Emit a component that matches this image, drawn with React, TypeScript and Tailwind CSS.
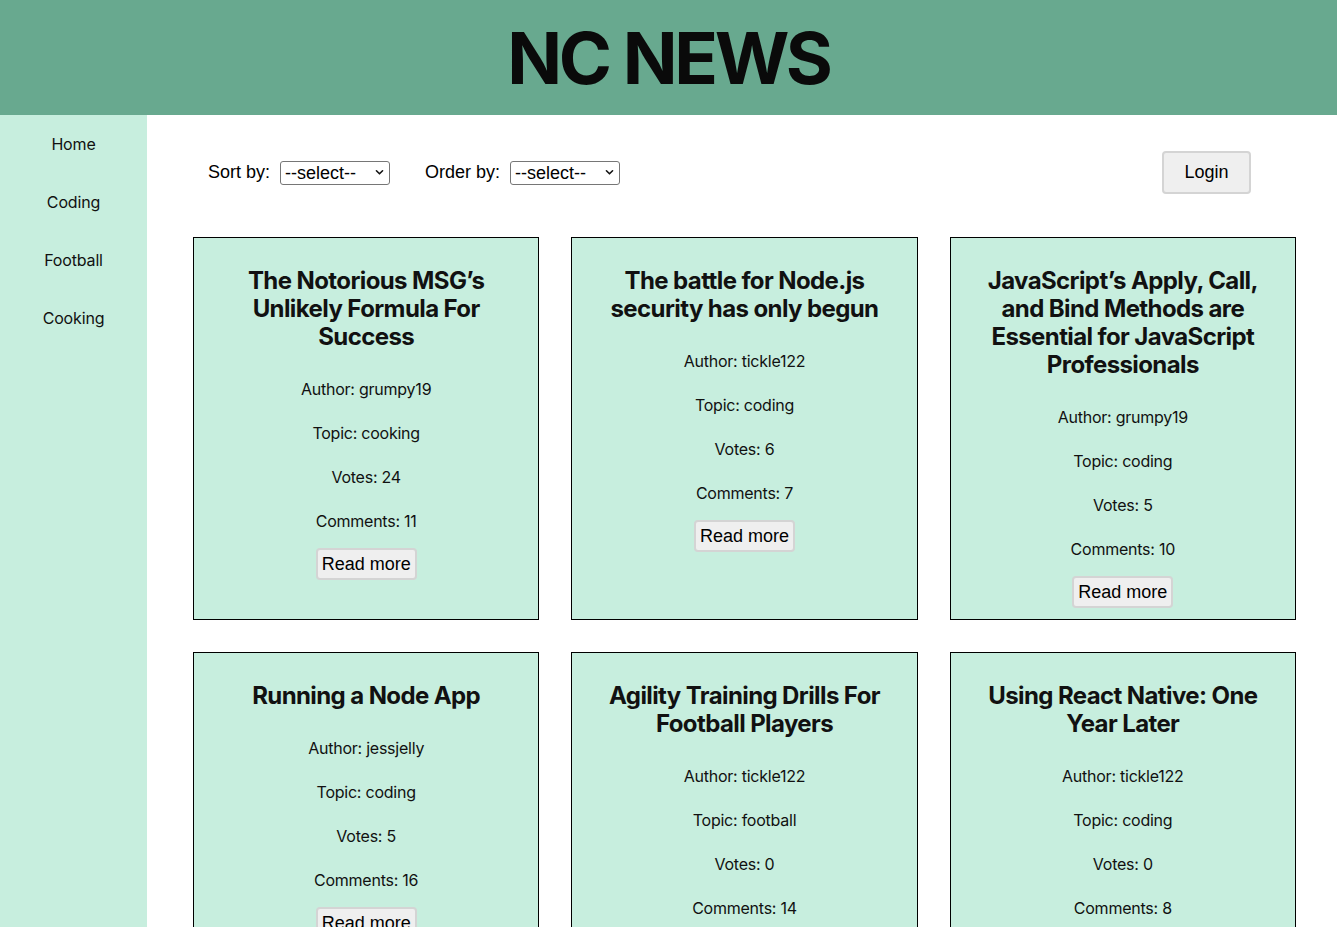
import React from "react";

type Article = {
  title: string;
  author: string;
  topic: string;
  votes: number;
  comments: number;
};

const articles: Article[] = [
  { title: "The Notorious MSG’s Unlikely Formula For Success", author: "grumpy19", topic: "cooking", votes: 24, comments: 11 },
  { title: "The battle for Node.js security has only begun", author: "tickle122", topic: "coding", votes: 6, comments: 7 },
  { title: "JavaScript’s Apply, Call, and Bind Methods are Essential for JavaScript Professionals", author: "grumpy19", topic: "coding", votes: 5, comments: 10 },
  { title: "Running a Node App", author: "jessjelly", topic: "coding", votes: 5, comments: 16 },
  { title: "Agility Training Drills For Football Players", author: "tickle122", topic: "football", votes: 0, comments: 14 },
  { title: "Using React Native: One Year Later", author: "tickle122", topic: "coding", votes: 0, comments: 8 },
];

const topics = ["Home", "Coding", "Football", "Cooking"];

function Select({ id }: { id: string }) {
  return (
    <div className="relative h-6 w-[110px]">
      <select
        id={id}
        className="h-6 w-full appearance-none rounded-[3px] border border-[#767676] bg-white pl-[4px] pr-6 font-['Liberation_Sans',Arial,sans-serif] text-[18px] leading-none text-black"
        defaultValue=""
      >
        <option value="">--select--</option>
        <option value="created_at">date</option>
        <option value="votes">votes</option>
        <option value="comment_count">comments</option>
      </select>
      <svg
        aria-hidden="true"
        className="pointer-events-none absolute right-[6px] top-[9px] h-[7px] w-[9px]"
        viewBox="0 0 10 8"
        fill="none"
        stroke="#111"
        strokeWidth="1.8"
        strokeLinecap="round"
        strokeLinejoin="round"
      >
        <path d="M1.5 2 5 5.5 8.5 2" />
      </svg>
    </div>
  );
}

function ArticleCard({ article }: { article: Article }) {
  return (
    <div className="flex flex-col items-center border border-black bg-[#c7eede] px-[30px] pt-[29px] pb-[11px] text-center text-[#111]">
      <h2 className="text-[24px] font-bold leading-[28px] tracking-[-0.025em]">{article.title}</h2>
      <div className="mt-[28px] flex flex-col gap-[24px] text-[16px] leading-[20px] tracking-[-0.015em]">
        <p>Author: {article.author}</p>
        <p>Topic: {article.topic}</p>
        <p>Votes: {article.votes}</p>
        <p>Comments: {article.comments}</p>
      </div>
      <button className="mt-[17px] h-8 rounded-[4px] border-2 border-[#d4d4d4] bg-[#efefef] px-[4px] font-['Liberation_Sans',Arial,sans-serif] text-[18px] leading-none text-black">
        Read more
      </button>
    </div>
  );
}

export default function App() {
  return (
    <div className="flex min-h-screen flex-col bg-white font-['Inter','Noto_Sans',sans-serif] text-[#111]">
      <header className="flex h-[115px] items-center justify-center bg-[#68a98f]">
        <h1 className="text-[72px] font-bold leading-none tracking-[-0.045em] text-[#0a0a0a]">NC NEWS</h1>
      </header>

      <div className="flex flex-1">
        <nav className="w-[147px] shrink-0 bg-[#c7eede]">
          <ul className="flex flex-col items-center gap-[38px] pt-[19px] text-[16px] leading-[20px] tracking-[-0.01em]">
            {topics.map((t) => (
              <li key={t}>
                <a href="#" className="text-[#111]">
                  {t}
                </a>
              </li>
            ))}
          </ul>
        </nav>

        <main className="flex-1 pt-[36px] pl-[46px] pr-[41px] pb-10">
          <div className="flex h-[43px] items-center pl-[15px] pr-[45px] font-['Liberation_Sans',Arial,sans-serif] text-[18px] text-black">
            <label htmlFor="sort" className="mr-[10px]">
              Sort by:
            </label>
            <div className="-mt-[2px]">
              <Select id="sort" />
            </div>
            <label htmlFor="order" className="ml-[35px] mr-[10px]">
              Order by:
            </label>
            <div className="-mt-[2px]">
              <Select id="order" />
            </div>
            <button className="ml-auto h-[43px] w-[89px] rounded-[4px] border-2 border-[#d4d4d4] bg-[#efefef] text-[18px] text-black">
              Login
            </button>
          </div>

          <div className="mt-[43px] grid grid-cols-3 gap-8">
            {articles.map((a) => (
              <ArticleCard key={a.title} article={a} />
            ))}
          </div>
        </main>
      </div>
    </div>
  );
}
